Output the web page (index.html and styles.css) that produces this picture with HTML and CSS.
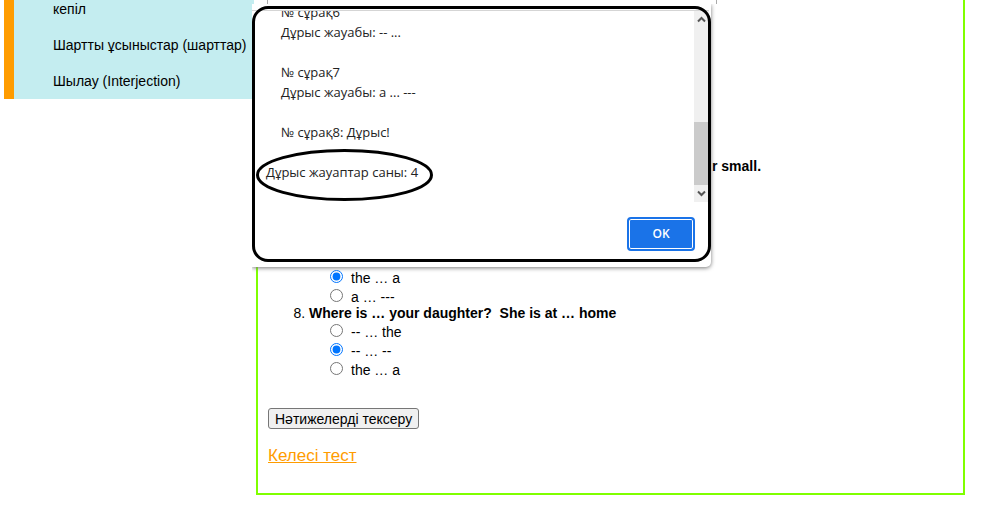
FILE: index.html
```html
<!DOCTYPE html>
<html lang="kk">
<head>
<meta charset="utf-8">
<title>Тест</title>
<link rel="stylesheet" href="styles.css">
</head>
<body>
<div class="page">
  <nav class="sidebar">
    <ul class="topics">
      <li>кепіл</li>
      <li>Шартты ұсыныстар (шарттар)</li>
      <li>Шылау (Interjection)</li>
    </ul>
  </nav>
  <main class="content">
    <p class="question-tail">r small.</p>
    <div class="options">
      <label class="option"><input type="radio" name="q7" checked><span>the … a</span></label>
      <label class="option"><input type="radio" name="q7"><span>a … ---</span></label>
    </div>
    <ol class="questions" start="8">
      <li>
        <p class="question">Where is … your daughter?&nbsp; She is at … home</p>
      </li>
    </ol>
    <div class="options">
      <label class="option"><input type="radio" name="q8"><span>-- … the</span></label>
      <label class="option"><input type="radio" name="q8" checked><span>-- … --</span></label>
      <label class="option"><input type="radio" name="q8"><span>the … a</span></label>
    </div>
    <button class="check" type="button">Нәтижелерді тексеру</button>
    <a class="next" href="#">Келесі тест</a>
  </main>
</div>
<div class="dialog" role="dialog" aria-label="Нәтиже">
  <div class="message">
    <div class="lines">
      <p>№ сұрақ6</p>
      <p>Дұрыс жауабы: -- ...</p>
      <p class="gap">№ сұрақ7</p>
      <p>Дұрыс жауабы: a ... ---</p>
      <p class="gap">№ сұрақ8: Дұрыс!</p>
      <p class="total">Дұрыс жауаптар саны: 4</p>
    </div>
    <div class="scrollbar">
      <svg width="15" height="17" viewBox="0 0 15 17"><path d="M4 10.500l3.500-3.500 3.500 3.500" /></svg>
      <div class="thumb"></div>
      <svg width="15" height="17" viewBox="0 0 15 17"><path d="M4 6.500l3.500 3.500 3.500-3.500" /></svg>
    </div>
  </div>
  <div class="actions"><button class="ok" type="button">OK</button></div>
  <div class="frame"></div>
  <svg class="ring" width="178" height="53" viewBox="0 0 178 53"><ellipse cx="88.500" cy="26" rx="87" ry="24.500"/></svg>
</div>
<div class="dialog-top"></div>
</body>
</html>
```
FILE: styles.css
```css
* { box-sizing: border-box; }
body {
  margin: 0;
  background: #fff;
  color: #000;
  font: 14px/18px "Liberation Sans", Arial, sans-serif;
}
p, ul, ol { margin: 0; padding: 0; }
.page {
  display: flex;
  align-items: flex-start;
  gap: 2px;
  padding: 0 16px 0 4px;
}
.sidebar {
  flex: 0 0 250px;
  padding-bottom: 9px;
  border-left: 10px solid #ff9c00;
  background: #c4edf0;
}
.topics {
  display: flex;
  flex-direction: column;
  gap: 18px;
  padding-left: 39px;
  list-style: none;
  white-space: nowrap;
}
.content {
  flex: 1;
  padding: 157px 10px 27px;
  border: solid #7fff00;
  border-width: 0 2px 2px;
}
.question-tail {
  margin-bottom: 93px;
  padding-left: 444px;
  font-weight: bold;
}
.options { padding-left: 62px; }
.option {
  display: flex;
  align-items: flex-start;
  gap: 8px;
  height: 19px;
}
.option input {
  width: 13px;
  height: 13px;
  margin: 2px 0 0;
}
.option span { padding-top: 1px; }
.questions {
  padding: 0 0 2px 41px;
  line-height: 14px;
}
.question { font-weight: bold; }
.check {
  display: block;
  height: 21px;
  margin: 29px 0 17px;
  padding: 0 6px;
  border: 1px solid #767676;
  border-radius: 3px;
  background: #f0f0f0;
  font: 14px/18px "Liberation Sans", Arial, sans-serif;
}
.next {
  display: block;
  width: fit-content;
  color: #ff9c00;
  font-size: 17px;
  line-height: 20px;
}
.dialog {
  position: absolute;
  top: 4px;
  left: 252px;
  width: 459px;
  padding-top: 6px;
  border-radius: 0 0 5px 0;
  background: #fff;
  box-shadow: 0 1px 4px #777;
  clip-path: inset(0 -8px -8px 0);
}
.message {
  display: flex;
  height: 192px;
  margin-right: 2px;
  border-top: 1px solid #d5d5d5;
  overflow: hidden;
}
.lines {
  flex: 1;
  margin-top: -9px;
  padding-left: 29px;
  color: #222;
  font: 13px/20px "Open Sans", "Noto Sans", sans-serif;
}
.gap { margin-top: 20px; }
.total { margin: 20px 0 0 -15px; }
.scrollbar {
  display: flex;
  flex-direction: column;
  width: 15px;
  background: #f0f0f0;
}
.scrollbar path {
  fill: none;
  stroke: #555;
  stroke-width: 2;
}
.thumb {
  height: 63px;
  margin-top: auto;
  background: #cbcbcb;
}
.actions {
  display: flex;
  justify-content: flex-end;
  padding: 15px 16px 16px 0;
}
.ok {
  width: 68px;
  height: 34px;
  border: 2px solid #1a73e8;
  border-radius: 4px;
  background: #1a73e8;
  box-shadow: inset 0 0 0 1px #fff;
  color: #fff;
  font: 600 12px/20px "Open Sans", "Noto Sans", sans-serif;
}
.frame {
  position: absolute;
  top: 2px;
  right: 0;
  bottom: 5px;
  left: 0;
  border: 3px solid #000;
  border-radius: 16px;
  pointer-events: none;
}
.ring {
  position: absolute;
  top: 145px;
  left: 4px;
  fill: none;
  stroke: #000;
  stroke-width: 3;
}
.dialog-top {
  position: absolute;
  top: 0;
  left: 254px;
  width: 463px;
  height: 4px;
  border-right: 1px solid #aaa;
  background: linear-gradient(90deg, #fff 13px, #aaa 13px 14px, #fff 14px);
}
```
